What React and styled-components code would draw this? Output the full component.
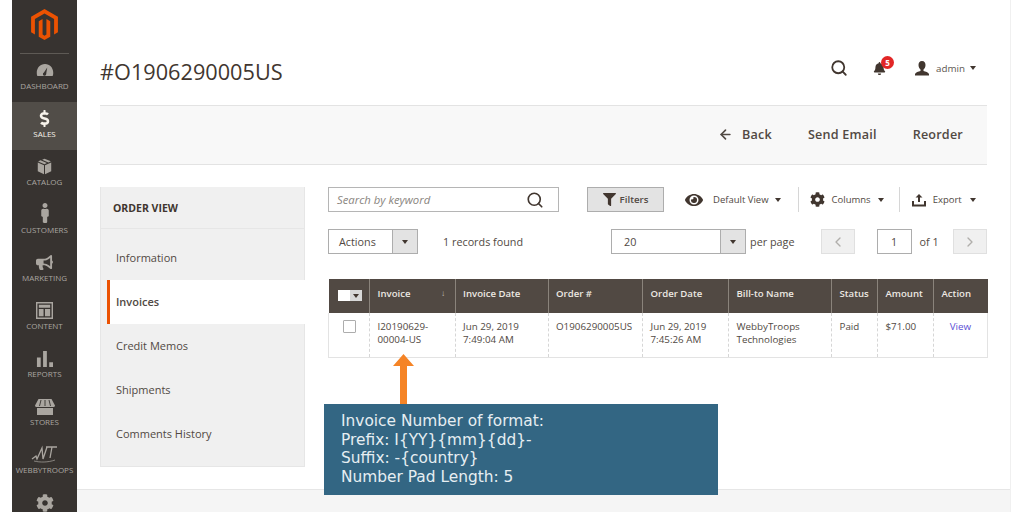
import styled, { createGlobalStyle } from "styled-components";
import { SiMagento } from "react-icons/si";
import {
  FaBullhorn,
  FaCog,
  FaDollarSign,
  FaEye,
  FaFilter,
  FaMale,
  FaBell,
} from "react-icons/fa";
import { FiSearch, FiArrowLeft, FiChevronLeft, FiChevronRight } from "react-icons/fi";

const GlobalStyle = createGlobalStyle`
  html, body {
    margin: 0;
    padding: 0;
    background: #fff;
    font-family: "Open Sans", "Liberation Sans", sans-serif;
    color: #41362f;
  }
  * { box-sizing: border-box; }
`;

const Page = styled.div`
  width: 1024px;
  height: 512px;
  overflow: hidden;
  display: flex;
  padding-left: 12px;
  position: relative;
`;

/* left navigation */
const Sidebar = styled.nav`
  width: 65px;
  flex: none;
  background: #373330;
  display: flex;
  flex-direction: column;
`;

const LogoBox = styled.div`
  height: 54px;
  margin: 0 8px;
  flex: none;
  border-bottom: 1px solid #5e5a55;
  display: flex;
  justify-content: center;
  padding-top: 9px;
  color: #eb5202;
  font-size: 31px;
`;

const NavItem = styled.div`
  height: 48px;
  flex: none;
  display: flex;
  flex-direction: column;
  align-items: center;
  justify-content: flex-end;
  padding-bottom: 11px;
  background: ${(p) => (p.$active ? "#514d48" : "transparent")};
  color: ${(p) => (p.$active ? "#f7f3eb" : "#aaa6a0")};
  font-size: 8px;
  line-height: 11px;
  text-transform: uppercase;
  white-space: nowrap;
  svg { font-size: ${(p) => p.$size || 18}px; margin-bottom: 1px; }
`;

const BareNavItem = styled(NavItem)`
  justify-content: flex-start;
  padding: 8px 0 0;
`;

/* main column */
const Main = styled.div`
  width: 934px;
  flex: none;
  border-right: 1px solid #f0f0f0;
  display: flex;
  flex-direction: column;
`;

const Content = styled.div`
  flex: 1;
  padding: 0 23px;
  min-height: 0;
`;

const TopBar = styled.header`
  height: 105px;
  display: flex;
  align-items: center;
  padding-top: 37px;
`;

const Title = styled.h1`
  margin: 0;
  font-size: 21.7px;
  font-weight: 400;
  color: #41362f;
  flex: 1;
`;

const TopActions = styled.div`
  display: flex;
  align-items: center;
  margin-top: -6px;
  padding-right: 11px;
  font-size: 9.8px;
  color: #5d5650;
`;

const BellWrap = styled.div`
  position: relative;
  display: flex;
  margin: 0 28px 0 25px;
  font-size: 13px;
  color: #41362f;
`;

const Badge = styled.span`
  position: absolute;
  top: -6px;
  left: 8px;
  width: 13px;
  height: 13px;
  border-radius: 50%;
  background: #e22626;
  color: #fff;
  font-size: 8px;
  font-weight: 700;
  display: flex;
  align-items: center;
  justify-content: center;
`;

const UserIcon = styled.svg`
  width: 16px;
  height: 16px;
  margin-right: 6px;
  color: #41362f;
`;

const Caret = styled.span`
  display: inline-block;
  width: 0;
  height: 0;
  margin-left: ${(p) => p.$gap || 0}px;
  border-left: 3.5px solid transparent;
  border-right: 3.5px solid transparent;
  border-top: 4px solid ${(p) => p.$color || "#41362f"};
`;

const ActionBar = styled.div`
  height: 60px;
  background: #f8f8f8;
  border-top: 1px solid #e3e3e3;
  border-bottom: 1px solid #e3e3e3;
  display: flex;
  align-items: center;
  justify-content: flex-end;
  padding: 0 24px 2px 0;
  gap: 36px;
  font-size: 12.6px;
  font-weight: 600;
  color: #514943;
  letter-spacing: 0.2px;
`;

const BackLink = styled.span`
  display: flex;
  align-items: center;
  gap: 9px;
  svg { font-size: 15px; stroke-width: 2.6; }
`;

const Columns = styled.div`
  display: flex;
  margin-top: 22px;
  gap: 23px;
`;

/* order view panel */
const SidePanel = styled.aside`
  width: 205px;
  flex: none;
  height: 280px;
  background: #f0f0f0;
  border: 1px solid #e6e6e6;
  border-top: 0;
  font-size: 11px;
  color: #514943;
`;

const PanelHead = styled.div`
  height: 42px;
  padding-left: 12px;
  display: flex;
  align-items: center;
  font-weight: 700;
  font-size: 10.5px;
  color: #41362f;
  border-bottom: 1px solid #e6e6e6;
`;

const PanelItem = styled.div`
  height: 44px;
  display: flex;
  align-items: center;
  padding: 0 0 2px 15px;
  font-weight: ${(p) => (p.$active ? 600 : 400)};
  ${(p) =>
    p.$active &&
    `
    background: #fff;
    margin-left: 6px;
    margin-right: -1px;
    padding-left: 6px;
    border-left: 3px solid #eb5202;
  `}
`;

const PanelList = styled.div`
  padding-top: 7px;
`;

/* grid area */
const Grid = styled.section`
  flex: 1;
  min-width: 0;
`;

const Row = styled.div`
  display: flex;
  align-items: center;
  height: 25px;
`;

const SearchBox = styled.div`
  width: 231px;
  height: 25px;
  border: 1px solid #b5b5b5;
  display: flex;
  align-items: center;
  justify-content: space-between;
  padding: 0 14px 0 8px;
  font-size: 11.3px;
  font-style: italic;
  color: #8a8580;
  svg { font-size: 18px; color: #41362f; }
`;

const FilterBtn = styled.div`
  width: 77px;
  height: 25px;
  margin-left: 28px;
  background: #e3e3e3;
  border: 1px solid #adadad;
  display: flex;
  align-items: center;
  justify-content: center;
  gap: 4px;
  font-size: 9.7px;
  font-weight: 600;
  color: #514943;
  svg { font-size: 13px; color: #41362f; }
`;

const ToolItem = styled.div`
  display: flex;
  align-items: center;
  font-size: 9.5px;
  color: #514943;
  white-space: nowrap;
  margin-left: ${(p) => p.$left}px;
  svg { font-size: ${(p) => p.$icon || 14}px; color: #41362f; margin-right: ${(p) => p.$iconGap || 10}px; }
`;

const ToolDivider = styled.div`
  width: 1px;
  height: 25px;
  background: #d6d6d6;
  margin-left: ${(p) => p.$left}px;
`;

const PagerRow = styled(Row)`
  margin-top: 17px;
  font-size: 10.8px;
  color: #514943;
`;

const Select = styled.div`
  width: ${(p) => p.$width}px;
  height: 25px;
  margin-left: ${(p) => p.$left || 0}px;
  border: 1px solid #adadad;
  display: flex;
  align-items: center;
  justify-content: space-between;
  padding-left: ${(p) => p.$pad || 10}px;
  flex: none;
`;

const SelectArrow = styled.span`
  width: 25px;
  height: 100%;
  background: #e3e3e3;
  border-left: 1px solid #adadad;
  display: flex;
  align-items: center;
  justify-content: center;
`;

const PagerText = styled.span`
  margin-left: ${(p) => p.$left}px;
  white-space: nowrap;
`;

const PageBtn = styled.div`
  width: 34px;
  height: 25px;
  margin-left: ${(p) => p.$left}px;
  flex: none;
  background: #f0f0f0;
  border: 1px solid #e0e0e0;
  display: flex;
  align-items: center;
  justify-content: center;
  color: #b0aeab;
  font-size: 16px;
`;

const PageInput = styled.div`
  width: 35px;
  height: 25px;
  margin-left: 22px;
  flex: none;
  border: 1px solid #adadad;
  display: flex;
  align-items: center;
  justify-content: center;
`;

const Table = styled.table`
  width: 659px;
  margin-top: 25px;
  border-collapse: collapse;
  table-layout: fixed;
  font-size: 9.8px;
  color: #514943;
`;

const Th = styled.th`
  height: 34px;
  background: #514943;
  color: #ece8e2;
  font-weight: 600;
  font-size: 9.6px;
  text-align: left;
  padding: 0 7.5px 5px;
  border-left: 1px solid #8a837b;
  white-space: nowrap;
  &:first-child { border-left: 0; }
`;

const Td = styled.td`
  height: 44px;
  vertical-align: top;
  padding: 7px 7.5px 0;
  line-height: 13px;
  border-left: 1px dashed #d6d6d6;
  border-bottom: 1px solid #e3e3e3;
  &:first-child { border-left: 1px solid #e3e3e3; }
  &:last-child { border-right: 1px solid #e3e3e3; }
`;

const SortMark = styled.span`
  float: right;
  font-size: 8px;
  margin-right: 2px;
  color: #c8c3bc;
`;

const HeadCheck = styled.div`
  display: flex;
  width: 24px;
  height: 11px;
  margin-left: 1.5px;
  margin-top: 4px;
`;

const HeadCheckBox = styled.span`
  flex: 1;
  background: #fff;
`;

const HeadCheckArrow = styled.span`
  width: 12px;
  background: #d8d8d8;
  display: flex;
  align-items: center;
  justify-content: center;
`;

const RowCheck = styled.div`
  width: 13px;
  height: 13px;
  margin-left: 6px;
  border: 1px solid #adadad;
  border-radius: 1px;
`;

const ViewLink = styled.a`
  display: block;
  text-align: center;
  color: #5b4fd6;
`;

const Footer = styled.footer`
  height: 23px;
  flex: none;
  background: #f5f5f5;
  border-top: 1px solid #e6e6e6;
`;

/* annotation lying over the page */
const Callout = styled.div`
  position: absolute;
  left: 324px;
  top: 404px;
  width: 394px;
  height: 91px;
  padding: 8px 17px;
  background: #336683;
  color: #e6eef2;
  font-family: "DejaVu Sans", sans-serif;
  font-size: 15.4px;
  line-height: 18.6px;
  white-space: pre-line;
`;

const Arrow = styled.svg`
  position: absolute;
  left: 393px;
  top: 354px;
`;

function GaugeIcon() {
  return (
    <svg width="1em" height="1em" viewBox="0 0 24 20" fill="currentColor">
      <path d="M12 2C5.5 2 1 7 1 14c0 1.5.3 3 .8 4h20.4c.5-1 .8-2.500.8-4 0-7-4.500-12-11-12zm1.600 13.500a2.200 2.200 0 1 1-3-2.200L15 6.500l-1.200 7.200c-.1.600 0 1.200-.2 1.800z" />
    </svg>
  );
}

function BoxIcon() {
  return (
    <svg width="1em" height="1em" viewBox="0 0 24 24" fill="currentColor">
      <path d="M12 1l9 3.500-3.500 1.700L8.700 2.400 12 1zM6.300 3.300l9 3.900L12 8.800 3 5l3.300-1.700zM2.500 6.500l8.800 3.800v12.700l-8.800-4.300V6.500zm19 0v12.200L12.700 23V10.300l8.800-3.800z" />
    </svg>
  );
}

function ContentIcon() {
  return (
    <svg width="1em" height="1em" viewBox="0 0 18 18" fill="currentColor">
      <path fillRule="evenodd" d="M0 0h18v18H0V0zm1.500 1.500v15h15v-15h-15zM3 3h12v3H3V3zm0 4.500h5V15H3V7.500zm6.500 0H15V15H9.500V7.500z" />
    </svg>
  );
}

function BarsIcon() {
  return (
    <svg width="1em" height="1em" viewBox="0 0 18 18" fill="currentColor">
      <path d="M1 8h4v10H1zM7.500 1h4v17h-4zM14 13h4v5h-4z" />
    </svg>
  );
}

function StoreIcon() {
  return (
    <svg width="1em" height="0.8em" viewBox="0 0 20 16" fill="currentColor">
      <path d="M3.500 0h13L20 6.500c0 1-1 1.500-2 1.500H2C1 8 0 7.500 0 6.500L3.500 0zM2 9h16v7H2z" />
      <path d="M6 1L4.500 7M10 1v6M14 1l1.500 6" stroke="#373330" strokeWidth="0.900" fill="none" />
    </svg>
  );
}

function WebbyIcon() {
  return (
    <svg width="27" height="18" viewBox="0 0 27 18" fill="none" stroke="currentColor" strokeWidth="1.300">
      <path d="M1 14l4-3 1 3 5-11 1 11 4-12M15 2h11M21 2l-2 11" />
      <path d="M3 16c6 1.500 14 1.500 21-1" strokeWidth="0.700" />
    </svg>
  );
}

function ExportIcon() {
  return (
    <svg width="14" height="14" viewBox="0 0 14 14" fill="currentColor">
      <path d="M7 1l3.500 3.500H8V9H6V4.500H3.500L7 1zM0 8h2v3.500h10V8h2v5.500H0V8z" />
    </svg>
  );
}

const navItems = [
  { label: "Dashboard", icon: <GaugeIcon />, size: 18 },
  { label: "Sales", icon: <FaDollarSign />, size: 17, active: true },
  { label: "Catalog", icon: <BoxIcon />, size: 17 },
  { label: "Customers", icon: <FaMale />, size: 20 },
  { label: "Marketing", icon: <FaBullhorn />, size: 17 },
  { label: "Content", icon: <ContentIcon />, size: 17 },
  { label: "Reports", icon: <BarsIcon />, size: 17 },
  { label: "Stores", icon: <StoreIcon />, size: 20 },
  { label: "WebbyTroops", icon: <WebbyIcon /> },
];

const columns = [
  { title: "", width: 41 },
  { title: "Invoice", width: 85.5, sort: true },
  { title: "Invoice Date", width: 93 },
  { title: "Order #", width: 94.5 },
  { title: "Order Date", width: 86 },
  { title: "Bill-to Name", width: 103 },
  { title: "Status", width: 46 },
  { title: "Amount", width: 56 },
  { title: "Action", width: 54 },
];

export default function App() {
  return (
    <>
      <GlobalStyle />
      <Page>
        <Sidebar>
          <LogoBox>
            <SiMagento />
          </LogoBox>
          {navItems.map((item, i) => (
            <NavItem key={i} $active={item.active} $size={item.size}>
              {item.icon}
              {item.label}
            </NavItem>
          ))}
          <BareNavItem $size={18}>
            <FaCog />
          </BareNavItem>
        </Sidebar>
        <Main>
          <Content>
            <TopBar>
              <Title>#O1906290005US</Title>
              <TopActions>
                <FiSearch size={18} color="#41362f" strokeWidth={2.4} />
                <BellWrap>
                  <FaBell />
                  <Badge>5</Badge>
                </BellWrap>
                <UserIcon viewBox="0 0 16 16" fill="currentColor">
                  <path d="M8 1c2.500 0 3.500 2 3.500 4s-1 4-2 4.500V11c2 .8 5 1.200 5.500 3v1.500H1V14c.5-1.800 3.500-2.200 5.500-3V9.500c-1-.5-2-2.500-2-4.500S5.500 1 8 1z" />
                </UserIcon>
                admin
                <Caret $gap={5} />
              </TopActions>
            </TopBar>
            <ActionBar>
              <BackLink>
                <FiArrowLeft />
                Back
              </BackLink>
              <span>Send Email</span>
              <span>Reorder</span>
            </ActionBar>
            <Columns>
              <SidePanel>
                <PanelHead>ORDER VIEW</PanelHead>
                <PanelList>
                  <PanelItem>Information</PanelItem>
                  <PanelItem $active>Invoices</PanelItem>
                  <PanelItem>Credit Memos</PanelItem>
                  <PanelItem>Shipments</PanelItem>
                  <PanelItem>Comments History</PanelItem>
                </PanelList>
              </SidePanel>
              <Grid>
                <Row>
                  <SearchBox>
                    Search by keyword
                    <FiSearch strokeWidth={2.2} />
                  </SearchBox>
                  <FilterBtn>
                    <FaFilter />
                    Filters
                  </FilterBtn>
                  <ToolItem $left={21} $icon={18} $iconGap={10}>
                    <FaEye />
                    Default View
                    <Caret $gap={6} />
                  </ToolItem>
                  <ToolDivider $left={17} />
                  <ToolItem $left={11} $icon={15} $iconGap={7}>
                    <FaCog />
                    Columns
                    <Caret $gap={7} />
                  </ToolItem>
                  <ToolDivider $left={15} />
                  <ToolItem $left={12} $iconGap={7}>
                    <ExportIcon />
                    Export
                    <Caret $gap={8} />
                  </ToolItem>
                </Row>
                <PagerRow>
                  <Select $width={90}>
                    Actions
                    <SelectArrow>
                      <Caret />
                    </SelectArrow>
                  </Select>
                  <PagerText $left={25}>1 records found</PagerText>
                  <Select $width={135} $left={88} $pad={12}>
                    20
                    <SelectArrow>
                      <Caret />
                    </SelectArrow>
                  </Select>
                  <PagerText $left={4}>per page</PagerText>
                  <PageBtn $left={26}>
                    <FiChevronLeft />
                  </PageBtn>
                  <PageInput>1</PageInput>
                  <PagerText $left={8}>of 1</PagerText>
                  <PageBtn $left={14}>
                    <FiChevronRight />
                  </PageBtn>
                </PagerRow>
                <Table>
                  <colgroup>
                    {columns.map((c, i) => (
                      <col key={i} style={{ width: c.width }} />
                    ))}
                  </colgroup>
                  <thead>
                    <tr>
                      {columns.map((c, i) => (
                        <Th key={i}>
                          {i === 0 ? (
                            <HeadCheck>
                              <HeadCheckBox />
                              <HeadCheckArrow>
                                <Caret />
                              </HeadCheckArrow>
                            </HeadCheck>
                          ) : (
                            c.title
                          )}
                          {c.sort && <SortMark>↓</SortMark>}
                        </Th>
                      ))}
                    </tr>
                  </thead>
                  <tbody>
                    <tr>
                      <Td>
                        <RowCheck />
                      </Td>
                      <Td>
                        I20190629-
                        <br />
                        00004-US
                      </Td>
                      <Td>
                        Jun 29, 2019
                        <br />
                        7:49:04 AM
                      </Td>
                      <Td>O1906290005US</Td>
                      <Td>
                        Jun 29, 2019
                        <br />
                        7:45:26 AM
                      </Td>
                      <Td>
                        WebbyTroops
                        <br />
                        Technologies
                      </Td>
                      <Td>Paid</Td>
                      <Td>$71.00</Td>
                      <Td>
                        <ViewLink>View</ViewLink>
                      </Td>
                    </tr>
                  </tbody>
                </Table>
              </Grid>
            </Columns>
          </Content>
          <Footer />
        </Main>
        <Arrow width="21" height="50" viewBox="0 0 21 50" fill="#f58426">
          <path d="M10.500 0L21 12h-7v38H7V12H0z" />
        </Arrow>
        <Callout>
          {"Invoice Number of format:\nPrefix: I{YY}{mm}{dd}-\nSuffix: -{country}\nNumber Pad Length: 5"}
        </Callout>
      </Page>
    </>
  );
}
